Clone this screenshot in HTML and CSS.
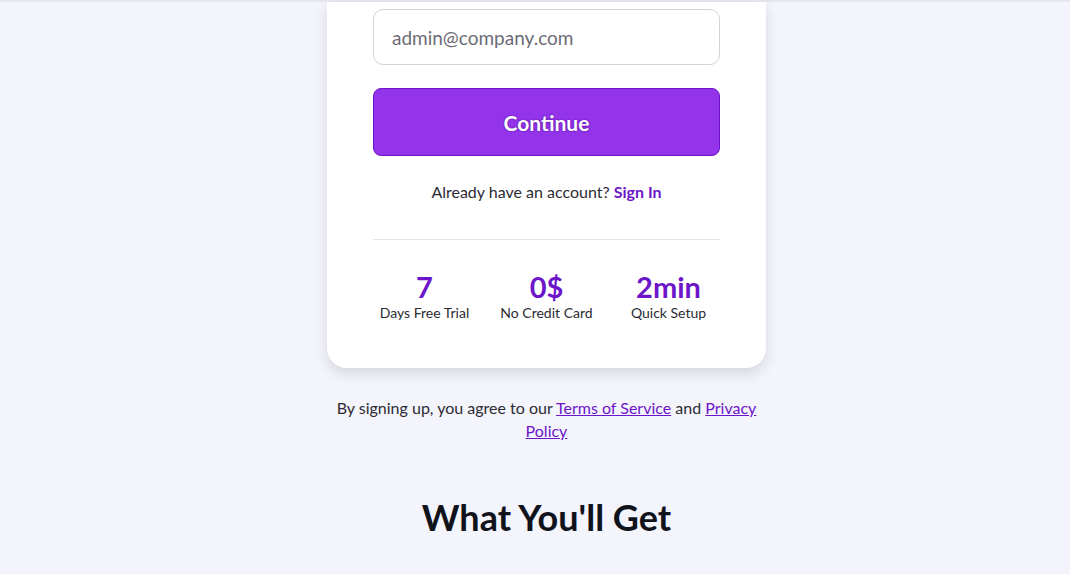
FILE: index.html
```html
<!DOCTYPE html>
<html lang="en">
<head>
    <meta charset="UTF-8">
    <meta name="viewport" content="width=device-width, initial-scale=1.0">
    <title>Create your account</title>
    <link rel="stylesheet" href="styles.css">
</head>
<body>
    <div class="top-bar"></div>

    <div class="page">
        <main class="signup">
            <div class="signup-card">
                <form class="signup-form">
                    <input type="email" class="email-input" placeholder="admin@company.com">
                    <button type="submit" class="continue-btn">Continue</button>
                </form>

                <p class="signin-note">Already have an account? <a href="#" class="signin-link">Sign In</a></p>

                <div class="stats">
                    <div class="stat">
                        <span class="stat-value">7</span>
                        <span class="stat-label">Days Free Trial</span>
                    </div>
                    <div class="stat">
                        <span class="stat-value">0$</span>
                        <span class="stat-label">No Credit Card</span>
                    </div>
                    <div class="stat">
                        <span class="stat-value">2min</span>
                        <span class="stat-label">Quick Setup</span>
                    </div>
                </div>
            </div>

            <p class="legal">By signing up, you agree to our <a href="#">Terms of Service</a> and <a href="#">Privacy Policy</a></p>
        </main>

        <section class="features">
            <h2>What You'll Get</h2>
        </section>
    </div>
</body>
</html>
```

FILE: styles.css
```css
:root {
    --bg-color: #f4f4fc;
    --card-bg: #ffffff;
    --text-color: #2b2b33;
    --primary-color: #9333ea;
    --primary-dark: #6d16c9;
    --border-color: #d4d4d8;
}

* {
    box-sizing: border-box;
}

body {
    margin: 0;
    font-family: 'Lato', 'Noto Sans', sans-serif;
    background-color: var(--bg-color);
    color: var(--text-color);
}

.top-bar {
    height: 2px;
    background-color: #e6e6ee;
}

/* content column sits slightly right of centre */
.page {
    padding-left: 23px;
}

.signup {
    width: 439px;
    margin: 0 auto;
}

.signup-card {
    background-color: var(--card-bg);
    border-radius: 0 0 20px 20px;
    box-shadow: 0 6px 14px rgba(0, 0, 0, 0.12);
    padding: 7px 46px 45px;
}

.signup-form {
    display: flex;
    flex-direction: column;
    gap: 23px;
}

.email-input {
    width: 100%;
    height: 56px;
    padding: 0 18px;
    border: 1px solid var(--border-color);
    border-radius: 10px;
    font-family: inherit;
    font-size: 19px;
    color: var(--text-color);
    background-color: #fff;
}

.email-input::placeholder {
    color: #6b6b76;
}

.continue-btn {
    width: 100%;
    height: 68px;
    border: 1px solid var(--primary-dark);
    border-radius: 8px;
    background-color: var(--primary-color);
    color: #fff;
    font-family: inherit;
    font-size: 21px;
    font-weight: 700;
    text-shadow: 0 0 2px rgba(60, 0, 110, 0.8);
    cursor: pointer;
}

.signin-note {
    margin: 26px 0 0;
    padding-bottom: 38px;
    border-bottom: 1px solid #e4e4e8;
    text-align: center;
    font-size: 16px;
}

.signin-link {
    color: var(--primary-dark);
    font-weight: 700;
    text-decoration: none;
}

.stats {
    display: grid;
    grid-template-columns: repeat(3, 1fr);
    gap: 19px;
    padding-top: 31px;
}

.stat {
    display: flex;
    flex-direction: column;
    align-items: center;
}

.stat-value {
    font-size: 29px;
    font-weight: 700;
    line-height: 32px;
    color: var(--primary-dark);
}

.stat-label {
    font-size: 14px;
    line-height: 20px;
}

.legal {
    margin: 28px 0 0;
    text-align: center;
    font-size: 16px;
    line-height: 23px;
}

.legal a {
    color: var(--primary-dark);
}

.features {
    padding-top: 53px;
    text-align: center;
}

.features h2 {
    margin: 0;
    font-size: 36px;
    font-weight: 700;
    color: #11131c;
}
```
